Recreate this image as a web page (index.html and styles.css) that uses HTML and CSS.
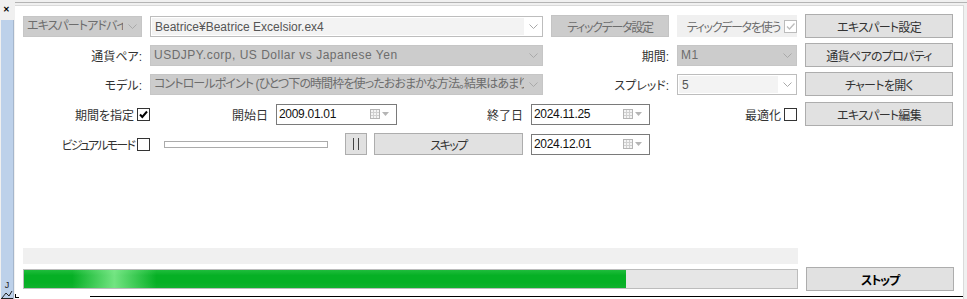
FILE: index.html
```html
<!DOCTYPE html>
<html lang="ja">
<head>
    <meta charset="UTF-8">
    <title>ストラテジーテスター</title>
    <link rel="stylesheet" href="styles.css">
</head>
<body>
    <div class="window">
        <div class="side">
            <div class="close">&#x2715;</div>
            <div class="side-tab">
                <span class="side-j">J</span>
                <svg class="side-icon" width="12" height="9" viewBox="0 0 12 9">
                    <path d="M1 8 L5 3 L8 6 L11 1" fill="none" stroke="#222" stroke-width="1"/>
                    <path d="M0 8.5 H12" stroke="#222" stroke-width="1"/>
                </svg>
            </div>
        </div>

        <div class="main">
            <div class="panel">
                <div class="grid">
                    <div class="combo disabled">
                        <span class="combo-text kana">エキスパートアドバイザ</span>
                        <span class="combo-arrow"><svg width="9" height="5" viewBox="0 0 9 5"><path d="M0.5 0.5 L4.5 4.5 L8.5 0.5" fill="none" stroke="#a9a9a9"/></svg></span>
                    </div>
                    <div class="combo open">
                        <span class="combo-text">Beatrice¥Beatrice Excelsior.ex4</span>
                        <span class="combo-arrow"><svg width="9" height="5" viewBox="0 0 9 5"><path d="M0.5 0.5 L4.5 4.5 L8.5 0.5" fill="none" stroke="#a9a9a9"/></svg></span>
                    </div>
                    <div class="btn disabled tight">ティックデータ設定</div>
                    <div class="check-box-cell">
                        <span class="tight">ティックデータを使う</span>
                        <span class="cb cb-disabled"><svg width="11" height="11" viewBox="0 0 11 11"><path d="M2 5.5 L4.5 8 L9.5 2.5" fill="none" stroke="#bcbcbc" stroke-width="1.3"/></svg></span>
                    </div>
                    <div class="btn">エキスパート設定</div>

                    <div class="label">通貨ペア:</div>
                    <div class="combo disabled">
                        <span class="combo-text wide">USDJPY.corp, US Dollar vs Japanese Yen</span>
                        <span class="combo-arrow"><svg width="9" height="5" viewBox="0 0 9 5"><path d="M0.5 0.5 L4.5 4.5 L8.5 0.5" fill="none" stroke="#a9a9a9"/></svg></span>
                    </div>
                    <div class="label">期間:</div>
                    <div class="combo disabled">
                        <span class="combo-text wide">M1</span>
                        <span class="combo-arrow"><svg width="9" height="5" viewBox="0 0 9 5"><path d="M0.5 0.5 L4.5 4.5 L8.5 0.5" fill="none" stroke="#a9a9a9"/></svg></span>
                    </div>
                    <div class="btn">通貨ペアのプロパティ</div>

                    <div class="label">モデル:</div>
                    <div class="combo disabled">
                        <span class="combo-text kana">コントロールポイント (ひとつ下の時間枠を使ったおおまかな方法。結果はあまり信頼できません)</span>
                        <span class="combo-arrow"><svg width="9" height="5" viewBox="0 0 9 5"><path d="M0.5 0.5 L4.5 4.5 L8.5 0.5" fill="none" stroke="#a9a9a9"/></svg></span>
                    </div>
                    <div class="label">スプレッド:</div>
                    <div class="combo open">
                        <span class="combo-text">5</span>
                        <span class="combo-arrow"><svg width="9" height="5" viewBox="0 0 9 5"><path d="M0.5 0.5 L4.5 4.5 L8.5 0.5" fill="none" stroke="#a9a9a9"/></svg></span>
                    </div>
                    <div class="btn">チャートを開く</div>
                </div>

                <div class="row row-dates">
                    <div class="check-label">
                        <span>期間を指定</span>
                        <span class="cb"><svg width="11" height="11" viewBox="0 0 11 11"><path d="M2 5.5 L4.3 8 L9 2.5" fill="none" stroke="#000" stroke-width="2"/></svg></span>
                    </div>
                    <div class="date-label start-label">開始日</div>
                    <div class="date date-first">
                        <span class="date-text">2009.01.01</span>
                        <span class="date-pick">
                            <svg width="20" height="10" viewBox="0 0 20 10"><rect x="0.5" y="0.5" width="9" height="9" fill="#f4f4f4" stroke="#b5b5b5"/><path d="M1 3.5 H9 M1 6.5 H9 M3.5 1 V9 M6.5 1 V9" stroke="#d0d0d0"/><path d="M12 3 H19 L15.5 7 Z" fill="#b5b5b5"/></svg>
                        </span>
                    </div>
                    <div class="date-label end-label">終了日</div>
                    <div class="date">
                        <span class="date-text">2024.11.25</span>
                        <span class="date-pick">
                            <svg width="20" height="10" viewBox="0 0 20 10"><rect x="0.5" y="0.5" width="9" height="9" fill="#f4f4f4" stroke="#b5b5b5"/><path d="M1 3.5 H9 M1 6.5 H9 M3.5 1 V9 M6.5 1 V9" stroke="#d0d0d0"/><path d="M12 3 H19 L15.5 7 Z" fill="#b5b5b5"/></svg>
                        </span>
                    </div>
                    <div class="check-label optimize">
                        <span>最適化</span>
                        <span class="cb"></span>
                    </div>
                    <div class="btn">エキスパート編集</div>
                </div>

                <div class="row row-visual">
                    <div class="check-label">
                        <span class="tighter">ビジュアルモード</span>
                        <span class="cb"></span>
                    </div>
                    <div class="slider"></div>
                    <div class="btn pause">
                        <svg width="8" height="12" viewBox="0 0 8 12"><path d="M1.5 0 V12 M6.5 0 V12" stroke="#444" stroke-width="1"/></svg>
                    </div>
                    <div class="btn skip">スキップ</div>
                    <div class="date">
                        <span class="date-text">2024.12.01</span>
                        <span class="date-pick">
                            <svg width="20" height="10" viewBox="0 0 20 10"><rect x="0.5" y="0.5" width="9" height="9" fill="#f4f4f4" stroke="#b5b5b5"/><path d="M1 3.5 H9 M1 6.5 H9 M3.5 1 V9 M6.5 1 V9" stroke="#d0d0d0"/><path d="M12 3 H19 L15.5 7 Z" fill="#b5b5b5"/></svg>
                        </span>
                    </div>
                </div>

                <div class="status"></div>

                <div class="row row-progress">
                    <div class="progress">
                        <div class="progress-fill" style="width: 602px"></div>
                    </div>
                    <div class="btn stop">ストップ</div>
                </div>

                <div class="tabline">
                    <span class="tab-corner"></span>
                    <span class="tab-edge"></span>
                </div>
            </div>
        </div>
    </div>
</body>
</html>
```

FILE: styles.css
```css
body {
    margin: 0;
    background-color: #f0f0f0;
    font-family: "Liberation Sans", "Noto Sans CJK JP", sans-serif;
    font-size: 12px;
    font-feature-settings: "palt" 1;
    color: #333;
}
.window {
    display: flex;
    width: 967px;
    height: 299px;
    overflow: hidden;
}
.side {
    width: 15px;
    display: flex;
    flex-direction: column;
}
.close {
    height: 20px;
    font-size: 8px;
    font-weight: bold;
    line-height: 20px;
    padding-left: 3px;
    color: #000;
}
.side-tab {
    flex: 1;
    margin-left: 1px;
    width: 12px;
    background-color: #bdd1ea;
    border-right: 1px solid #a5b6cc;
    display: flex;
    flex-direction: column;
    justify-content: flex-end;
    align-items: center;
}
.side-j {
    font-size: 9px;
    line-height: 9px;
    color: #222;
}
.side-icon {
    display: block;
}
.main {
    flex: 1;
    border-top: 1px solid #b4b4b4;
    margin-top: 2px;
}
.panel {
    margin-top: 2px;
    width: 949px;
    height: 294px;
    background-color: #fff;
    border-top: 1px solid #dadada;
    border-right: 1px solid #dadada;
    padding: 8px 0 0 8px;
    box-sizing: border-box;
    display: flex;
    flex-direction: column;
}
.grid {
    display: grid;
    grid-template-columns: 119px 393px 118px 120px 148px;
    grid-auto-rows: 24px;
    column-gap: 8px;
    row-gap: 5px;
    align-items: center;
}
.row {
    display: flex;
    align-items: center;
}
.label {
    text-align: right;
    white-space: nowrap;
}
.tight {
    letter-spacing: -1.3px;
}
.tighter {
    letter-spacing: -1.8px;
}
.kana {
    letter-spacing: -0.9px;
}
.wide {
    letter-spacing: 0.5px;
}
.combo {
    height: 21px;
    box-sizing: border-box;
    display: flex;
    align-items: stretch;
    border: 1px solid #c4c4c4;
    overflow: hidden;
}
.combo.disabled {
    background-color: #cccccc;
    border-color: #c6c6c6;
    color: #6d6d6d;
}
.combo.open {
    background-color: #fff;
    border-color: #bdbdbd;
    color: #555;
}
.combo.open .combo-text {
    background-color: #f3f3f3;
    margin: 1px 0 1px 1px;
}
.combo-text {
    flex: 1;
    padding-left: 3px;
    line-height: 19px;
    white-space: nowrap;
    overflow: hidden;
}
.combo-arrow {
    width: 18px;
    display: flex;
    align-items: center;
    justify-content: center;
}
.btn {
    height: 24px;
    box-sizing: border-box;
    border: 1px solid #adadad;
    background-color: #e1e1e1;
    color: #333;
    display: flex;
    align-items: center;
    justify-content: center;
    white-space: nowrap;
    letter-spacing: -0.7px;
}
.btn.disabled {
    height: 22px;
    background-color: #cccccc;
    border-color: #c4c4c4;
    color: #6d6d6d;
    letter-spacing: -1.3px;
}
.check-box-cell {
    height: 22px;
    background-color: #f0f0f0;
    display: flex;
    align-items: center;
    justify-content: flex-end;
    gap: 4px;
    color: #6d6d6d;
    white-space: nowrap;
}
.cb {
    flex: none;
    width: 13px;
    height: 13px;
    box-sizing: border-box;
    border: 1px solid #333;
    background-color: #fff;
    display: flex;
    align-items: center;
    justify-content: center;
}
.cb-disabled {
    border-color: #bcbcbc;
}
.check-label {
    width: 127px;
    display: flex;
    align-items: center;
    justify-content: flex-end;
    gap: 3px;
    white-space: nowrap;
}
.row-dates {
    margin-top: 6px;
    height: 24px;
}
.date-label {
    text-align: right;
}
.start-label {
    width: 118px;
}
.end-label {
    width: 126px;
}
.date {
    width: 119px;
    height: 21px;
    box-sizing: border-box;
    border: 1px solid #7a7a7a;
    background-color: #fff;
    margin-left: 8px;
    display: flex;
    align-items: center;
    color: #111;
}
.date-first {
    width: 121px;
}
.date-text {
    flex: 1;
    padding-left: 2px;
    letter-spacing: -0.3px;
}
.date-pick {
    width: 26px;
    display: flex;
    align-items: center;
}
.optimize {
    width: 147px;
}
.row-dates .btn {
    margin-left: 8px;
    width: 148px;
}
.row-visual {
    margin-top: 7px;
    height: 22px;
}
.slider {
    width: 164px;
    height: 7px;
    box-sizing: border-box;
    border: 1px solid #ababab;
    background-color: #fff;
    margin-left: 14px;
}
.pause {
    width: 22px;
    height: 22px;
    margin-left: 17px;
}
.skip {
    width: 149px;
    height: 22px;
    margin-left: 7px;
    letter-spacing: -1.6px;
}
.row-visual .date {
    margin-left: 8px;
}
.status {
    margin-top: 93px;
    width: 775px;
    height: 16px;
    background-color: #f0f0f0;
}
.row-progress {
    margin-top: 3px;
    height: 24px;
    gap: 8px;
}
.progress {
    width: 775px;
    height: 20px;
    box-sizing: border-box;
    border: 1px solid #bcbcbc;
    background-color: #e6e6e6;
}
.progress-fill {
    height: 100%;
    background: linear-gradient(90deg, rgba(255,255,255,0) 0, rgba(255,255,255,0) 8%, rgba(150,245,160,0.75) 15%, rgba(255,255,255,0) 22%),
                linear-gradient(180deg, #1fbd3c 0, #06b025 30%, #06b025 70%, #10b22e 100%);
}
.stop {
    width: 148px;
    font-weight: bold;
    color: #000;
    letter-spacing: -1.2px;
}
.tabline {
    margin-top: auto;
    margin-left: -8px;
    height: 3px;
    display: flex;
    align-items: flex-start;
}
.tab-corner {
    width: 3px;
    height: 3px;
    border-left: 1px solid #000;
    border-bottom: 1px solid #000;
    margin-top: -2px;
}
.tab-edge {
    flex: 1;
    margin-left: 71px;
    border-top: 1px solid #000;
}
```
